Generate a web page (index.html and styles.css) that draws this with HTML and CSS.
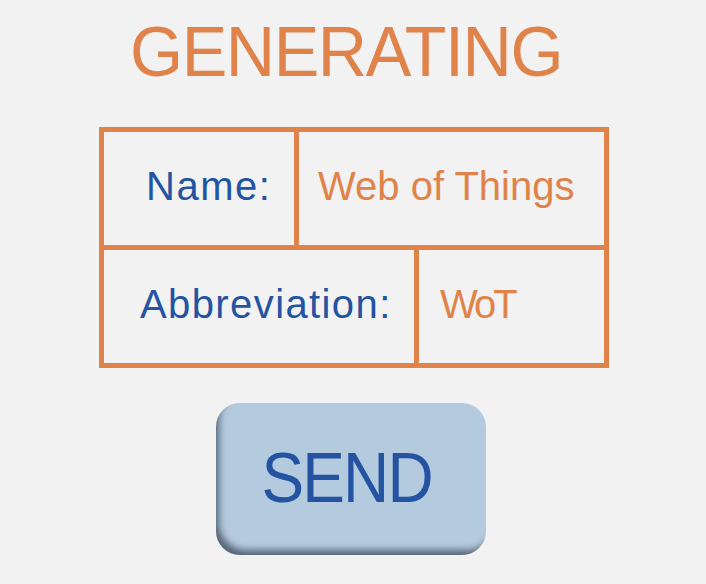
FILE: index.html
```html
<!DOCTYPE html>
<html>
<head>
<meta charset="utf-8">
<link rel="stylesheet" href="styles.css">
</head>
<body>
<main class="page">
  <h1 class="title"><span class="title-text">GENERATING</span></h1>
  <div class="table">
    <div class="row">
      <div class="cell label name-label">Name:</div>
      <div class="cell value name-value">Web of Things</div>
    </div>
    <div class="row row-second">
      <div class="cell label abbr-label">Abbreviation:</div>
      <div class="cell value abbr-value">WoT</div>
    </div>
  </div>
  <button class="send"><span class="send-text">SEND</span></button>
</main>
</body>
</html>
```
FILE: styles.css
```css
html, body {
  margin: 0;
  padding: 0;
  background: #f2f2f2;
}
body {
  width: 706px;
  height: 584px;
  overflow: hidden;
  font-family: "Liberation Sans", Arial, sans-serif;
}
.page {
  display: flex;
  flex-direction: column;
  align-items: flex-start;
  padding-top: 16px;
}
.title {
  margin: 0 0 0 130px;
  font-size: 71px;
  line-height: 1;
  font-weight: normal;
  color: #e0834a;
  white-space: nowrap;
}
.title-text {
  display: inline-block;
  letter-spacing: -1.5px;
  transform: scaleX(0.962);
  transform-origin: left center;
}
.table {
  margin: 40px 0 0 99px;
  width: 510px;
  display: flex;
  flex-direction: column;
}
.row {
  display: flex;
  height: 123px;
}
.row-second {
  margin-top: -5px;
}
.cell {
  box-sizing: border-box;
  border: 5px solid #e0834a;
  display: flex;
  align-items: center;
  font-size: 40px;
  line-height: 1;
  white-space: nowrap;
  padding-bottom: 5px;
}
.cell + .cell {
  margin-left: -5px;
}
.label {
  color: #2453a1;
}
.value {
  color: #e0834a;
  flex: 1;
}
.name-label {
  width: 200px;
  padding-left: 42px;
  letter-spacing: 1.5px;
}
.name-value {
  padding-left: 19px;
}
.abbr-label {
  width: 320px;
  padding-left: 36px;
  letter-spacing: 1.4px;
}
.abbr-value {
  padding-left: 21px;
  letter-spacing: -3px;
}
.send {
  margin: 35px 0 0 216px;
  width: 270px;
  height: 152px;
  border: none;
  border-radius: 24px;
  background: #b4cadf;
  box-shadow: inset 6px -8px 7px -3px rgba(70, 84, 100, 0.85);
  color: #2453a1;
  font-family: "Liberation Sans", Arial, sans-serif;
  font-size: 71px;
  line-height: 1;
  padding: 0 8px 4px 0;
  display: flex;
  align-items: center;
  justify-content: center;
}
.send-text {
  display: inline-block;
  letter-spacing: -2px;
  transform: scaleX(0.9);
}
```
